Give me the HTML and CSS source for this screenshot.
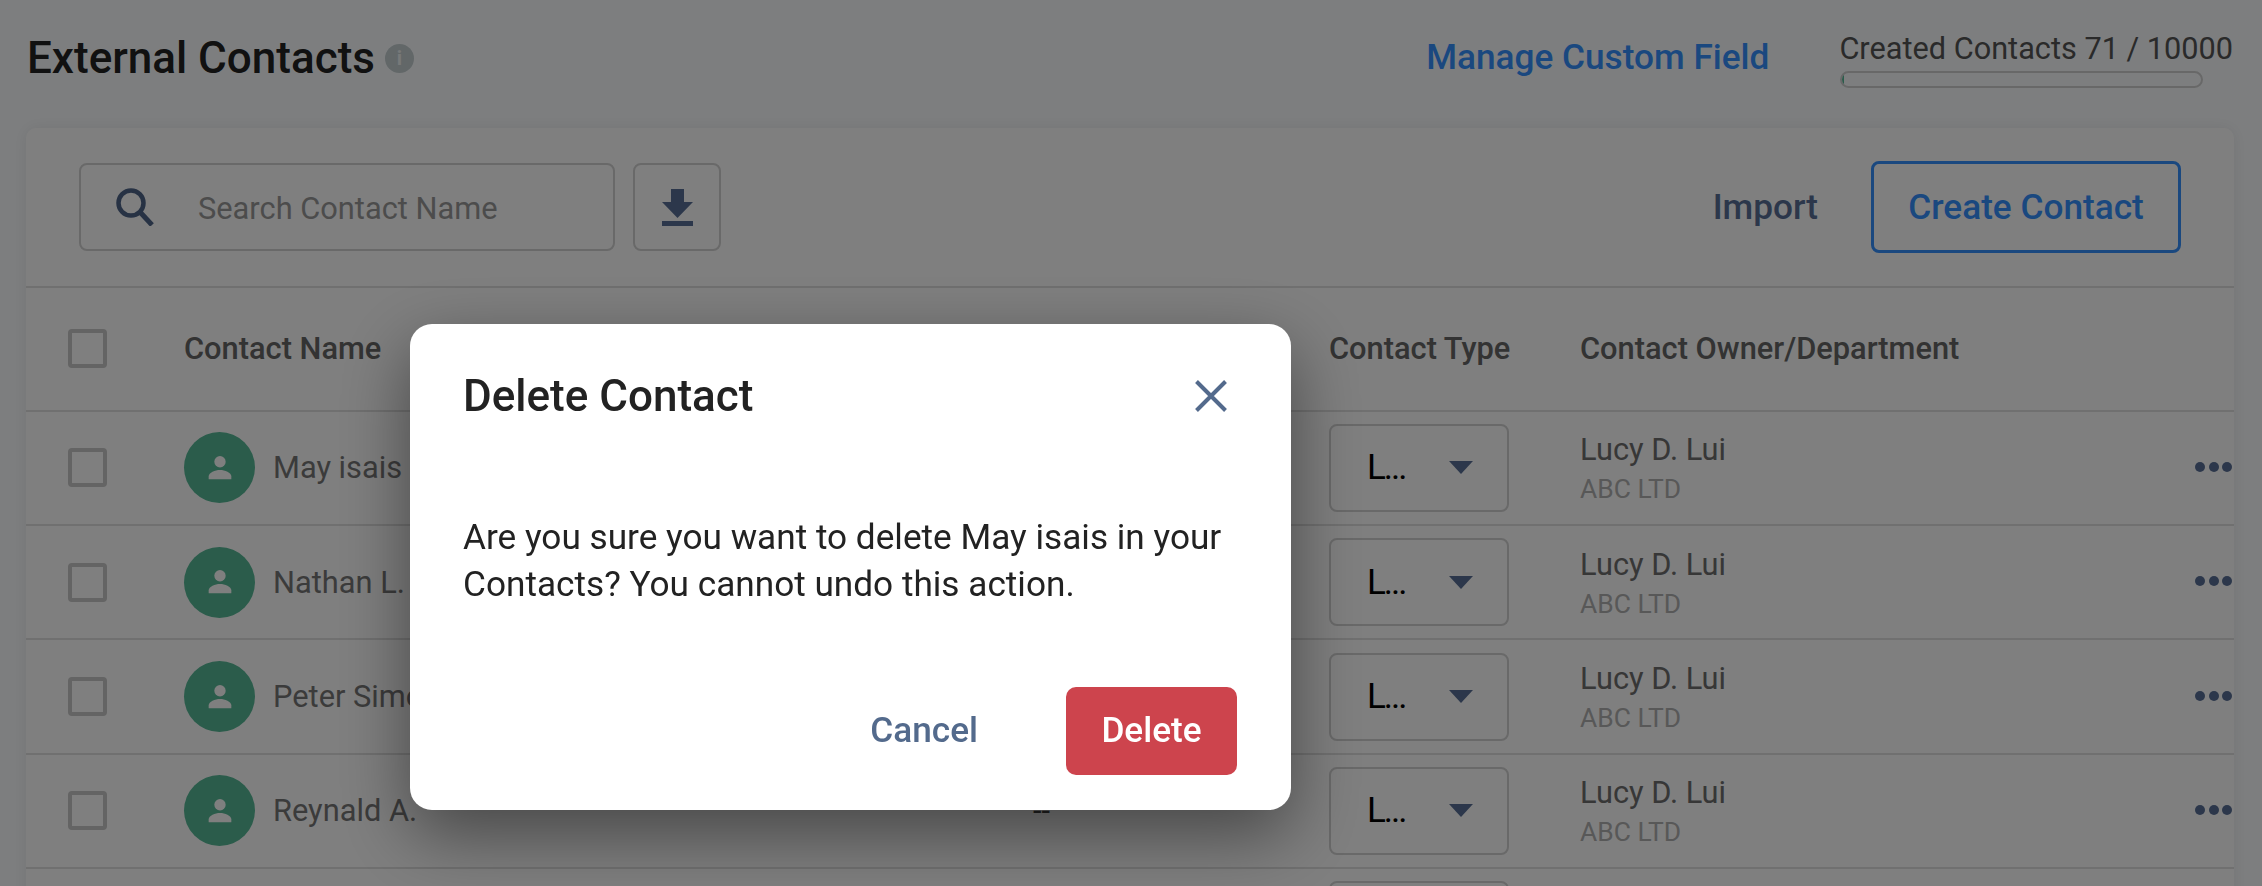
FILE: index.html
```html
<!DOCTYPE html>
<html lang="en">
<head>
    <meta charset="UTF-8">
    <meta name="viewport" content="width=device-width, initial-scale=1.0">
    <title>External Contacts</title>
    <link rel="stylesheet" href="styles.css">
</head>
<body>

    <svg class="icon-defs" width="0" height="0" aria-hidden="true">
        <symbol id="person" viewBox="0 0 24 24">
            <circle cx="12" cy="7.6" r="4"/>
            <path d="M4 20v-2c0-2.9 4.6-4.6 8-4.6s8 1.700 8 4.600v2z"/>
        </symbol>
    </svg>

    <div class="page">
        <header class="top">
            <div class="top-title">
                <h1>External Contacts</h1>
                <span class="info-dot">i</span>
            </div>
            <div class="top-right">
                <a class="manage-link">Manage Custom Field</a>
                <div class="quota">
                    <div class="quota-text">Created Contacts 71 / 10000</div>
                    <div class="quota-bar"><div class="quota-fill"></div></div>
                </div>
            </div>
        </header>

        <section class="card">
            <div class="toolbar">
                <div class="search">
                    <svg class="search-icon" viewBox="0 0 38 38" width="38" height="38">
                        <circle cx="15" cy="15" r="12.5" fill="none" stroke="#4e6488" stroke-width="4.500"/>
                        <path d="M24 24l12 13" fill="none" stroke="#4e6488" stroke-width="5"/>
                    </svg>
                    <span class="search-text">Search Contact Name</span>
                </div>
                <button class="download-btn">
                    <svg viewBox="0 0 31 37" width="31" height="37">
                        <path d="M9 0h13v13h9L15.500 29 0 13h9z" fill="#586f96"/>
                        <rect x="0" y="32" width="31" height="5" fill="#586f96"/>
                    </svg>
                </button>
                <a class="import-link">Import</a>
                <button class="create-btn">Create Contact</button>
            </div>

            <div class="row head-row">
                <div class="check"></div>
                <div class="col-name">Contact Name</div>
                <div class="col-extra"></div>
                <div class="col-type">Contact Type</div>
                <div class="col-owner">Contact Owner/Department</div>
            </div>

            <div class="row">
                <div class="check"></div>
                <div class="col-name name-cell">
                    <span class="avatar"><svg width="34" height="34"><use href="#person"/></svg></span>
                    <span>May isais</span>
                </div>
                <div class="col-extra"></div>
                <div class="col-type"><div class="type-select"><span class="type-value">L...</span><i class="caret"></i></div></div>
                <div class="col-owner">
                    <div class="owner">Lucy D. Lui</div>
                    <div class="dept">ABC LTD</div>
                </div>
                <div class="dots"><i></i><i></i><i></i></div>
            </div>

            <div class="row">
                <div class="check"></div>
                <div class="col-name name-cell">
                    <span class="avatar"><svg width="34" height="34"><use href="#person"/></svg></span>
                    <span>Nathan L.</span>
                </div>
                <div class="col-extra"></div>
                <div class="col-type"><div class="type-select"><span class="type-value">L...</span><i class="caret"></i></div></div>
                <div class="col-owner">
                    <div class="owner">Lucy D. Lui</div>
                    <div class="dept">ABC LTD</div>
                </div>
                <div class="dots"><i></i><i></i><i></i></div>
            </div>

            <div class="row">
                <div class="check"></div>
                <div class="col-name name-cell">
                    <span class="avatar"><svg width="34" height="34"><use href="#person"/></svg></span>
                    <span>Peter Simons</span>
                </div>
                <div class="col-extra"></div>
                <div class="col-type"><div class="type-select"><span class="type-value">L...</span><i class="caret"></i></div></div>
                <div class="col-owner">
                    <div class="owner">Lucy D. Lui</div>
                    <div class="dept">ABC LTD</div>
                </div>
                <div class="dots"><i></i><i></i><i></i></div>
            </div>

            <div class="row">
                <div class="check"></div>
                <div class="col-name name-cell">
                    <span class="avatar"><svg width="34" height="34"><use href="#person"/></svg></span>
                    <span>Reynald A.</span>
                </div>
                <div class="col-extra">--</div>
                <div class="col-type"><div class="type-select"><span class="type-value">L...</span><i class="caret"></i></div></div>
                <div class="col-owner">
                    <div class="owner">Lucy D. Lui</div>
                    <div class="dept">ABC LTD</div>
                </div>
                <div class="dots"><i></i><i></i><i></i></div>
            </div>

            <div class="row">
                <div class="check"></div>
                <div class="col-name"></div>
                <div class="col-extra"></div>
                <div class="col-type"><div class="type-select"></div></div>
                <div class="col-owner"></div>
            </div>
        </section>
    </div>

    <div class="overlay"></div>

    <div class="modal">
        <div class="modal-head">
            <h2>Delete Contact</h2>
            <svg class="modal-close" viewBox="0 0 32 32" width="32" height="32">
                <path d="M1.500 1.500l29 29M30.500 1.500l-29 29" fill="none" stroke="#536a8c" stroke-width="4"/>
            </svg>
        </div>
        <p class="modal-body">Are you sure you want to delete May isais in your Contacts? You cannot undo this action.</p>
        <div class="modal-foot">
            <button class="cancel-btn">Cancel</button>
            <button class="delete-btn">Delete</button>
        </div>
    </div>

</body>
</html>
```
FILE: styles.css
```css
html, body {
    margin: 0;
    height: 886px;
    overflow: hidden;
}

body {
    font-family: Roboto, Arial, sans-serif;
    background: #fbfdff;
}

.icon-defs {
    display: block;
    height: 0;
}

.page {
    padding: 0 28px 0 26px;
}

/* page header */
.top {
    height: 128px;
    display: flex;
    justify-content: space-between;
}

.top-title {
    display: flex;
    align-items: center;
    gap: 10px;
    height: 116px;
    padding-left: 1px;
}

h1 {
    margin: 0;
    font-size: 44px;
    font-weight: 500;
    color: #222;
}

.info-dot {
    width: 29px;
    height: 29px;
    border-radius: 50%;
    background: #c4ced1;
    color: #eef2f3;
    font-size: 20px;
    font-weight: 700;
    line-height: 29px;
    text-align: center;
}

.top-right {
    display: flex;
    gap: 70px;
    padding-right: 1px;
}

.manage-link {
    font-size: 35.2px;
    font-weight: 500;
    color: #3590ff;
    line-height: 114px;
}

.quota {
    padding-top: 31px;
}

.quota-text {
    font-size: 30.7px;
    line-height: 36px;
    color: #555;
}

.quota-bar {
    width: 363px;
    height: 17px;
    margin: 4px 0 0 1px;
    box-sizing: border-box;
    border: 2px solid #d0d0d0;
    border-radius: 9px;
    overflow: hidden;
}

.quota-fill {
    width: 2px;
    height: 100%;
    background: #56b896;
}

/* table card */
.card {
    background: #fff;
    border-radius: 10px 10px 0 0;
    box-shadow: 0 0 16px rgba(0, 0, 0, 0.08);
}

.toolbar {
    height: 160px;
    box-sizing: border-box;
    border-bottom: 2px solid #e0e0e0;
    padding: 0 53px;
    display: flex;
    align-items: center;
}

.search {
    width: 536px;
    height: 88px;
    box-sizing: border-box;
    border: 2px solid #d2d2d2;
    border-radius: 8px;
    display: flex;
    align-items: center;
    padding-left: 35px;
    gap: 44px;
}

.search-text {
    margin-top: 2px;
    font-size: 30.8px;
    color: #999;
}

.download-btn {
    width: 88px;
    height: 88px;
    margin-left: 18px;
    box-sizing: border-box;
    border: 2px solid #d2d2d2;
    border-radius: 8px;
    background: none;
    padding: 0;
    display: flex;
    align-items: center;
    justify-content: center;
}

.import-link {
    margin-left: auto;
    font-size: 35.2px;
    font-weight: 500;
    color: #586f96;
}

.create-btn {
    width: 310px;
    height: 92px;
    margin-left: 53px;
    box-sizing: border-box;
    border: 3px solid #3590ff;
    border-radius: 8px;
    background: none;
    font-family: inherit;
    font-size: 35.2px;
    font-weight: 500;
    color: #3590ff;
}

/* table rows */
.row {
    display: grid;
    grid-template-columns: 116px 849px 296px 251px 1fr 37px;
    align-items: center;
    height: 114.33px;
    box-sizing: border-box;
    padding: 0 2px 0 42px;
    border-bottom: 2px solid #e0e0e0;
}

.head-row {
    height: 123.7px;
    font-size: 30.8px;
    font-weight: 500;
    color: #666;
}

.check {
    width: 39px;
    height: 39px;
    box-sizing: border-box;
    border: 4px solid #c8c8c8;
    border-radius: 4px;
}

.name-cell {
    display: flex;
    align-items: center;
    gap: 18px;
    font-size: 30.8px;
    color: #777;
}

.col-extra {
    font-size: 30.8px;
    color: #444;
}

.avatar {
    width: 71px;
    height: 71px;
    border-radius: 50%;
    background: #56b896;
    display: flex;
    align-items: center;
    justify-content: center;
    fill: #fff;
}

.type-select {
    width: 180px;
    height: 88px;
    box-sizing: border-box;
    border: 2px solid #d2d2d2;
    border-radius: 8px;
    display: flex;
    align-items: center;
    justify-content: space-between;
    padding: 0 34px 0 36px;
    font-size: 35px;
    color: #000;
}

.type-value {
    letter-spacing: -2px;
}

.caret {
    width: 0;
    height: 0;
    border-left: 12px solid transparent;
    border-right: 12px solid transparent;
    border-top: 13px solid #586f96;
}

.owner {
    margin-top: 2px;
    font-size: 30.8px;
    line-height: 36px;
    color: #6e6e6e;
}

.dept {
    font-size: 26.4px;
    line-height: 32px;
    margin-top: 5px;
    color: #b0b0b0;
}

.dots {
    display: flex;
    justify-content: space-between;
    margin-top: -2px;
}

.dots i {
    width: 10px;
    height: 10px;
    border-radius: 50%;
    background: #586f96;
}

/* dim layer and dialog */
.overlay {
    position: fixed;
    inset: 0;
    background: rgba(0, 0, 0, 0.5);
}

.modal {
    position: fixed;
    left: 410px;
    top: 324px;
    width: 881px;
    height: 486px;
    box-sizing: border-box;
    padding: 0 54px 35px 53px;
    background: #fff;
    border-radius: 22px;
    box-shadow: 0 24px 70px rgba(0, 0, 0, 0.45);
    display: flex;
    flex-direction: column;
}

.modal-head {
    height: 144px;
    display: flex;
    align-items: center;
    justify-content: space-between;
    padding-right: 10px;
}

h2 {
    margin: 0;
    font-size: 44px;
    font-weight: 500;
    color: #222;
}

.modal-body {
    margin: 46px 0 0;
    font-size: 35.2px;
    line-height: 47px;
    color: #222;
}

.modal-foot {
    margin-top: auto;
    display: flex;
    justify-content: flex-end;
    align-items: center;
    gap: 88px;
}

.cancel-btn {
    border: none;
    background: none;
    padding: 0 0 2px;
    font-family: inherit;
    font-size: 35.2px;
    font-weight: 500;
    color: #536a8c;
}

.delete-btn {
    width: 171px;
    height: 88px;
    border: none;
    border-radius: 10px;
    padding: 0 0 2px;
    background: #cd444d;
    font-family: inherit;
    font-size: 35.2px;
    font-weight: 500;
    color: #fff;
}
```
